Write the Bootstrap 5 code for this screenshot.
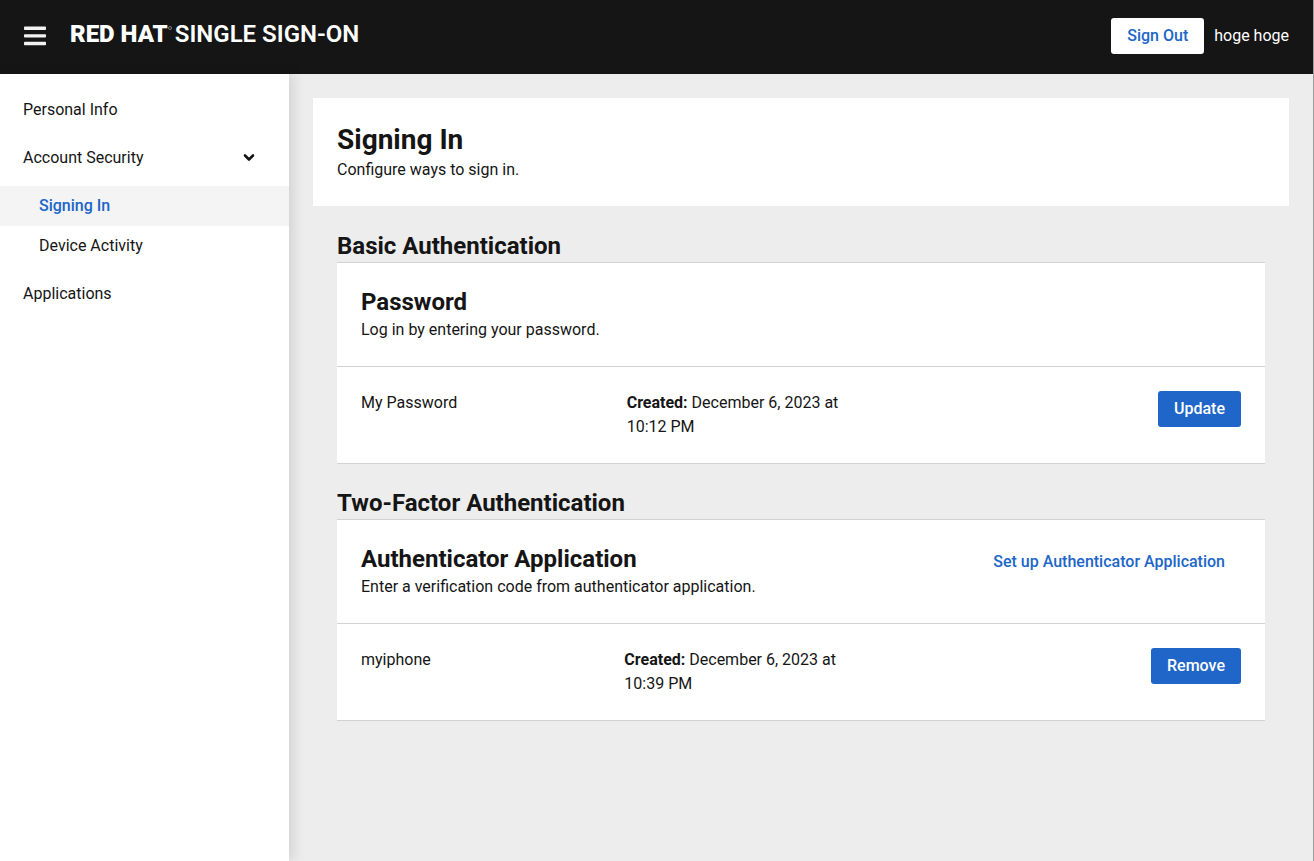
<!DOCTYPE html>
<html lang="en">
<head>
<meta charset="utf-8">
<meta name="viewport" content="width=device-width, initial-scale=1">
<title>Signing In</title>
<link href="https://cdn.jsdelivr.net/npm/bootstrap@5.3.0/dist/css/bootstrap.min.css" rel="stylesheet">
<style>
  :root { --ink: #151515; --blue: #2066c8; --line: #d2d2d2; --canvas: #ededed; }
  body { font-family: Roboto, "Liberation Sans", sans-serif; font-size: 16px; line-height: 24px; color: var(--ink); background: var(--canvas); border-right: 1px solid #9a9a9a; }
  .masthead { background: var(--ink); height: 74px; padding: 0 24px 2px; }
  .menu-btn { line-height: 0; }
  .brand { font-size: 24px; line-height: 24px; padding-bottom: 4px; margin-left: 24px; }
  .brand b { font-weight: 900; }
  .brand .product { font-weight: 600; }
  .brand .mark-dot { width: 4px; height: 4px; margin: 0 3px 12px 0; }
  .user-name { margin-left: 10px; }
  .btn { --bs-btn-padding-x: 16px; --bs-btn-padding-y: 6px; --bs-btn-border-width: 0; --bs-btn-border-radius: 3px; --bs-btn-line-height: 24px; --bs-btn-font-weight: 500; }
  .btn-primary { --bs-btn-bg: var(--blue); }
  .btn-light { --bs-btn-bg: #fff; --bs-btn-color: var(--blue); }
  .btn-link { --bs-btn-color: var(--blue); text-decoration: none; }
  .sidebar { width: 289px; background: #fff; box-shadow: 4px 0 12px rgba(0,0,0,.12); padding-top: 12px; }
  .sidebar .nav-link { color: var(--ink); padding: 12px 23px; }
  .sidebar .sub .nav-link { padding: 8px 39px; }
  .sidebar .sub .nav-link.active { color: var(--blue); background: #f4f4f4; font-weight: 500; }
  .sidebar .chev { margin-right: 11px; }
  h1 { font-size: 28px; line-height: 36px; font-weight: 700; }
  h2, h3 { font-size: 24px; line-height: 31px; font-weight: 700; }
  .sections { padding: 25px 24px; gap: 24px; }
  .cred { background: #fff; border: solid var(--line); border-width: 1px 0; }
  .cred-row { border-top: 1px solid var(--line); }
  .cell { flex: 1 1 0; padding-right: 24px; }
</style>
</head>
<body class="d-flex flex-column min-vh-100">
<header class="masthead d-flex align-items-center text-white">
  <button type="button" class="menu-btn border-0 bg-transparent p-0" aria-label="Menu">
    <svg width="22" height="20" viewBox="0 0 22 20" fill="#f2f2f2" aria-hidden="true"><rect y=".6" width="22" height="3.4" rx=".8"/><rect y="8.2" width="22" height="3.4" rx=".8"/><rect y="15.8" width="22" height="3.4" rx=".8"/></svg>
  </button>
  <a href="#" class="brand d-flex align-items-center text-white text-decoration-none"><b>RED HAT</b><svg class="mark-dot" viewBox="0 0 4 4" fill="none" stroke="#aaa" stroke-width=".7" aria-hidden="true"><circle cx="2" cy="2" r="1.5"/></svg><span class="product">SINGLE SIGN-ON</span></a>
  <button type="button" class="btn btn-light ms-auto">Sign Out</button>
  <span class="user-name">hoge hoge</span>
</header>
<div class="d-flex flex-grow-1">
  <nav class="sidebar flex-shrink-0">
    <ul class="nav flex-column">
      <li><a class="nav-link" href="#">Personal Info</a></li>
      <li>
        <a class="nav-link d-flex align-items-center justify-content-between" href="#">Account Security
          <svg class="chev" width="12" height="10" viewBox="0 0 12 10" fill="none" stroke="#151515" stroke-width="2.6" stroke-linecap="round" stroke-linejoin="round" aria-hidden="true"><path d="M2 2.5l4 4 4-4"/></svg></a>
        <ul class="sub nav flex-column pt-1">
          <li><a class="nav-link active" href="#">Signing In</a></li>
          <li><a class="nav-link" href="#">Device Activity</a></li>
        </ul>
      </li>
      <li class="pt-1"><a class="nav-link" href="#">Applications</a></li>
    </ul>
  </nav>
  <main class="flex-grow-1 p-4">
    <div class="bg-white p-4">
      <h1 class="mb-0">Signing In</h1>
      <p class="mb-0">Configure ways to sign in.</p>
    </div>
    <div class="sections d-flex flex-column">
      <section>
        <h2 class="mb-0">Basic Authentication</h2>
        <div class="cred">
          <div class="p-4">
            <h3 class="mb-0">Password</h3>
            <p class="mb-0">Log in by entering your password.</p>
          </div>
          <div class="cred-row d-flex align-items-start p-4">
            <div class="cell">My Password</div>
            <div class="cell"><strong>Created:</strong> December 6, 2023 at 10:12 PM</div>
            <div class="cell"></div>
            <button type="button" class="btn btn-primary">Update</button>
          </div>
        </div>
      </section>
      <section>
        <h2 class="mb-0">Two-Factor Authentication</h2>
        <div class="cred">
          <div class="p-4 d-flex align-items-start justify-content-between">
            <div>
              <h3 class="mb-0">Authenticator Application</h3>
              <p class="mb-0">Enter a verification code from authenticator application.</p>
            </div>
            <button type="button" class="btn btn-link">Set up Authenticator Application</button>
          </div>
          <div class="cred-row d-flex align-items-start p-4">
            <div class="cell">myiphone</div>
            <div class="cell"><strong>Created:</strong> December 6, 2023 at 10:39 PM</div>
            <div class="cell"></div>
            <button type="button" class="btn btn-primary">Remove</button>
          </div>
        </div>
      </section>
    </div>
  </main>
</div>
<script src="https://cdn.jsdelivr.net/npm/bootstrap@5.3.0/dist/js/bootstrap.bundle.min.js"></script>
</body>
</html>
